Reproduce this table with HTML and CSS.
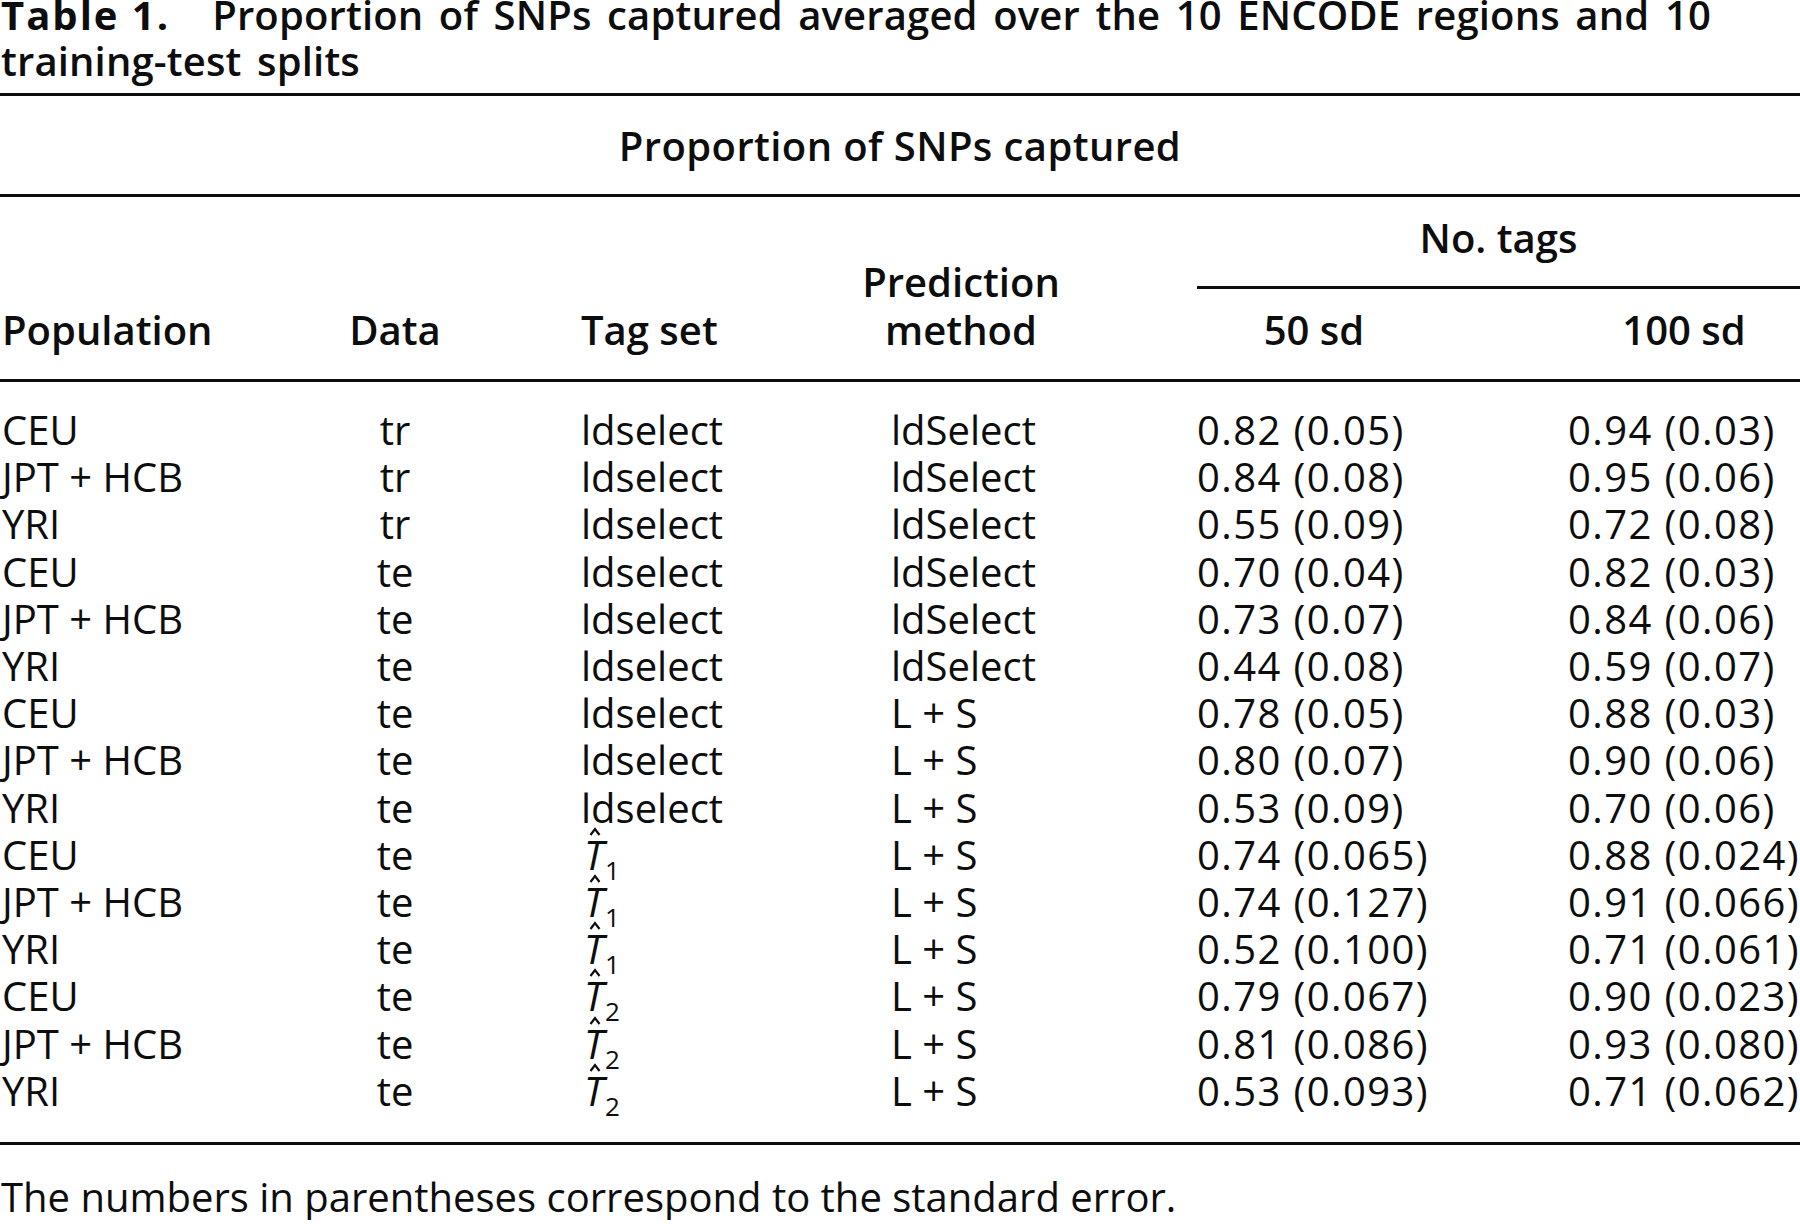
FILE: index.html
```html
<!DOCTYPE html>
<html lang="en">
<head>
<meta charset="utf-8">
<title>Table 1</title>
<link rel="stylesheet" href="styles.css">
</head>
<body>
<div class="page">
  <h1 class="caption"><span class="label">Table 1.</span><span class="ctext">Proportion of SNPs captured averaged over the 10 ENCODE regions and 10<br>training-test splits</span></h1>

  <div class="supertitle">Proportion of SNPs captured</div>

  <div class="grid head">
    <div class="hc h-pop">Population</div>
    <div class="hc h-data">Data</div>
    <div class="hc h-tag">Tag set</div>
    <div class="hc h-pred">Prediction<br>method</div>
    <div class="hc h-tags">No. tags</div>
    <div class="hc h-50">50 sd</div>
    <div class="hc h-100">100 sd</div>
  </div>

  <div class="grid body">
    <div class="c pop">CEU</div><div class="c dat">tr</div><div class="c tag">ldselect</div><div class="c pred">ldSelect</div><div class="c num">0.82 (0.05)</div><div class="c num">0.94 (0.03)</div>
    <div class="c pop">JPT + HCB</div><div class="c dat">tr</div><div class="c tag">ldselect</div><div class="c pred">ldSelect</div><div class="c num">0.84 (0.08)</div><div class="c num">0.95 (0.06)</div>
    <div class="c pop">YRI</div><div class="c dat">tr</div><div class="c tag">ldselect</div><div class="c pred">ldSelect</div><div class="c num">0.55 (0.09)</div><div class="c num">0.72 (0.08)</div>
    <div class="c pop">CEU</div><div class="c dat">te</div><div class="c tag">ldselect</div><div class="c pred">ldSelect</div><div class="c num">0.70 (0.04)</div><div class="c num">0.82 (0.03)</div>
    <div class="c pop">JPT + HCB</div><div class="c dat">te</div><div class="c tag">ldselect</div><div class="c pred">ldSelect</div><div class="c num">0.73 (0.07)</div><div class="c num">0.84 (0.06)</div>
    <div class="c pop">YRI</div><div class="c dat">te</div><div class="c tag">ldselect</div><div class="c pred">ldSelect</div><div class="c num">0.44 (0.08)</div><div class="c num">0.59 (0.07)</div>
    <div class="c pop">CEU</div><div class="c dat">te</div><div class="c tag">ldselect</div><div class="c pred">L + S</div><div class="c num">0.78 (0.05)</div><div class="c num">0.88 (0.03)</div>
    <div class="c pop">JPT + HCB</div><div class="c dat">te</div><div class="c tag">ldselect</div><div class="c pred">L + S</div><div class="c num">0.80 (0.07)</div><div class="c num">0.90 (0.06)</div>
    <div class="c pop">YRI</div><div class="c dat">te</div><div class="c tag">ldselect</div><div class="c pred">L + S</div><div class="c num">0.53 (0.09)</div><div class="c num">0.70 (0.06)</div>
    <div class="c pop">CEU</div><div class="c dat">te</div><div class="c tag"><span class="that"><svg class="hat" viewBox="0 0 12 9" width="12" height="9"><polyline points="1.5,8 6,2 10.5,8" /></svg><i>T</i><sub>1</sub></span></div><div class="c pred">L + S</div><div class="c num">0.74 (0.065)</div><div class="c num">0.88 (0.024)</div>
    <div class="c pop">JPT + HCB</div><div class="c dat">te</div><div class="c tag"><span class="that"><svg class="hat" viewBox="0 0 12 9" width="12" height="9"><polyline points="1.5,8 6,2 10.5,8" /></svg><i>T</i><sub>1</sub></span></div><div class="c pred">L + S</div><div class="c num">0.74 (0.127)</div><div class="c num">0.91 (0.066)</div>
    <div class="c pop">YRI</div><div class="c dat">te</div><div class="c tag"><span class="that"><svg class="hat" viewBox="0 0 12 9" width="12" height="9"><polyline points="1.5,8 6,2 10.5,8" /></svg><i>T</i><sub>1</sub></span></div><div class="c pred">L + S</div><div class="c num">0.52 (0.100)</div><div class="c num">0.71 (0.061)</div>
    <div class="c pop">CEU</div><div class="c dat">te</div><div class="c tag"><span class="that"><svg class="hat" viewBox="0 0 12 9" width="12" height="9"><polyline points="1.5,8 6,2 10.5,8" /></svg><i>T</i><sub>2</sub></span></div><div class="c pred">L + S</div><div class="c num">0.79 (0.067)</div><div class="c num">0.90 (0.023)</div>
    <div class="c pop">JPT + HCB</div><div class="c dat">te</div><div class="c tag"><span class="that"><svg class="hat" viewBox="0 0 12 9" width="12" height="9"><polyline points="1.5,8 6,2 10.5,8" /></svg><i>T</i><sub>2</sub></span></div><div class="c pred">L + S</div><div class="c num">0.81 (0.086)</div><div class="c num">0.93 (0.080)</div>
    <div class="c pop">YRI</div><div class="c dat">te</div><div class="c tag"><span class="that"><svg class="hat" viewBox="0 0 12 9" width="12" height="9"><polyline points="1.5,8 6,2 10.5,8" /></svg><i>T</i><sub>2</sub></span></div><div class="c pred">L + S</div><div class="c num">0.53 (0.093)</div><div class="c num">0.71 (0.062)</div>
  </div>

  <p class="note">The numbers in parentheses correspond to the standard error.</p>
</div>
</body>
</html>
```

FILE: styles.css
```css
html, body {
  margin: 0;
  padding: 0;
  background: #ffffff;
  overflow: hidden;
}

.page {
  width: 1800px;
  color: #0d0d0d;
  font-family: "Open Sans", "Noto Sans", "DejaVu Sans", sans-serif;
  font-size: 40px;
}

.caption {
  margin: -8px 0 0 0;
  padding: 0 0 9px 1px;
  font-size: 40px;
  line-height: 46px;
  font-weight: 600;
  word-spacing: 5px;
  letter-spacing: 0.15px;
  border-bottom: 3px solid #0d0d0d;
}

.caption .label {
  font-weight: 700;
  letter-spacing: 2px;
  word-spacing: 0;
  margin-right: 42px;
}

.supertitle {
  text-align: center;
  font-weight: 600;
  letter-spacing: 0.4px;
  line-height: 48px;
  padding: 26px 0 24px 0;
  border-bottom: 3px solid #0d0d0d;
}

.grid {
  display: grid;
  grid-template-columns: 300px 190px 331px 376px 371px 232px;
}

.head {
  font-weight: 600;
  line-height: 48px;
  border-bottom: 3px solid #0d0d0d;
}

.hc {
  white-space: nowrap;
}

.h-pop, .h-data, .h-tag, .h-pred {
  grid-row: 1 / 3;
  align-self: end;
  padding-bottom: 25px;
}

.h-pop { grid-column: 1; padding-left: 2px; }
.h-data { grid-column: 2; text-align: center; }
.h-tag { grid-column: 3; padding-left: 91px; }
.h-pred { grid-column: 4; text-align: center; padding-right: 96px; }

.h-tags {
  grid-column: 5 / 7;
  grid-row: 1;
  text-align: center;
  padding: 17px 0 24px 0;
  border-bottom: 3px solid #0d0d0d;
}

.h-50 {
  grid-column: 5;
  grid-row: 2;
  text-align: center;
  padding: 17px 137px 25px 0;
}

.h-100 {
  grid-column: 6;
  grid-row: 2;
  text-align: center;
  padding: 17px 0 25px 0;
}

.body {
  line-height: 47.2px;
  padding: 24px 0 28px 0;
  border-bottom: 3px solid #0d0d0d;
}

.c {
  white-space: nowrap;
}

.pop { padding-left: 2px; }
.dat { text-align: center; }
.tag { padding-left: 91px; }
.pred { padding-left: 70px; }
.num { letter-spacing: 1.4px; }

.that {
  position: relative;
  display: inline-block;
  padding-left: 3px;
}

.that i {
  font-style: italic;
}

.that sub {
  font-size: 26px;
  line-height: 0;
  vertical-align: -10px;
  margin-left: 1px;
}

.hat {
  position: absolute;
  left: 8px;
  top: -4px;
  overflow: visible;
}

.hat polyline {
  fill: none;
  stroke: #0d0d0d;
  stroke-width: 2.2;
}

.note {
  margin: 28px 0 0 0;
  line-height: 47.2px;
  padding-left: 1px;
}
```
